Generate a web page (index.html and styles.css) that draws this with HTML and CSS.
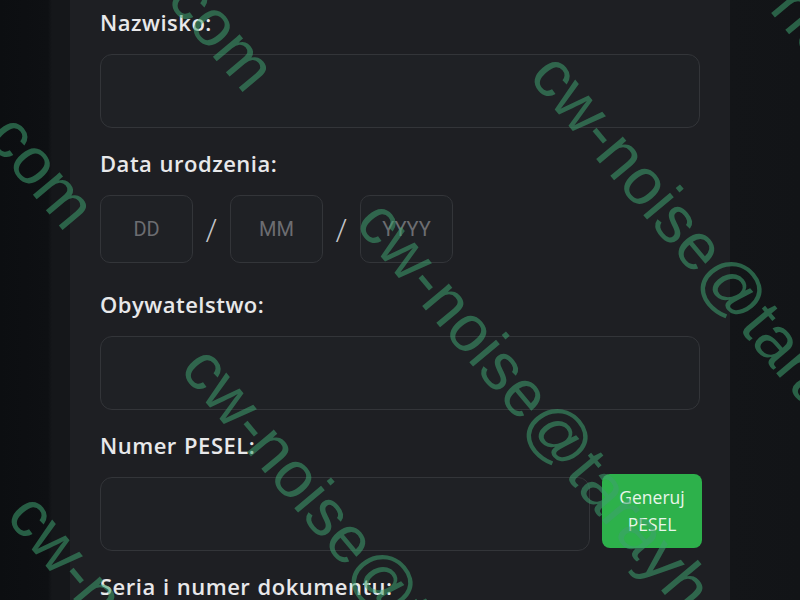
FILE: index.html
```html
<!DOCTYPE html>
<html lang="pl">
<head>
<meta charset="utf-8">
<title>Formularz</title>
<link rel="stylesheet" href="styles.css">
</head>
<body>
<div class="page">
  <main class="card">
    <div class="field">
      <label class="label">Nazwisko:</label>
      <input class="input" type="text">
    </div>
    <div class="field">
      <label class="label">Data urodzenia:</label>
      <div class="date-row">
        <input class="date-box" type="text" placeholder="DD">
        <span class="slash">/</span>
        <input class="date-box" type="text" placeholder="MM">
        <span class="slash">/</span>
        <input class="date-box" type="text" placeholder="YYYY">
      </div>
    </div>
    <div class="field">
      <label class="label">Obywatelstwo:</label>
      <input class="input" type="text">
    </div>
    <div class="field">
      <label class="label">Numer PESEL:</label>
      <div class="pesel-row">
        <input class="input" type="text">
        <button class="btn" type="button">Generuj<br>PESEL</button>
      </div>
    </div>
    <div class="field">
      <label class="label">Seria i numer dokumentu:</label>
    </div>
  </main>
  <div class="watermarks" aria-hidden="true">
    <span class="wm wm-a">cw-noise@tarayh</span>
    <span class="wm wm-b">cw-noise@tarayh</span>
    <span class="wm wm-c">cw-noise@tarayh</span>
    <span class="wm wm-d">cw-noise@tarayh</span>
    <span class="wm wm-e">cw-noise@tarayh</span>
    <span class="wm wm-f">.com</span>
    <span class="wm wm-g">.com</span>
  </div>
</div>
</body>
</html>
```
FILE: styles.css
```css
* { box-sizing: border-box; }

html, body {
  margin: 0;
  height: 600px;
  overflow: hidden;
}

body {
  background: linear-gradient(to right, #0c0e11 0, #0e1013 48px, #15171a 52px, #15171a 70px, #1e1f23 70px, #1e1f23 730px, #131518 730px, #121417 800px);
  font-family: "Open Sans", "Liberation Sans", sans-serif;
  color: #e6e6e8;
}

.page {
  position: relative;
  height: 600px;
}

.card {
  margin-left: 70px;
  width: 660px;
  height: 600px;
  background: #1e1f23;
  padding: 7px 30px 0;
}

.field {
  margin-bottom: 20px;
}

.label {
  display: block;
  font-size: 22px;
  line-height: 30px;
  font-weight: 600;
  letter-spacing: 0.5px;
  word-spacing: 1px;
  color: #e8e8ea;
  margin-bottom: 17px;
}

.input {
  display: block;
  width: 600px;
  height: 74px;
  background: #1f2125;
  border: 1.5px solid #333539;
  border-radius: 12px;
  outline: none;
  flex-shrink: 0;
}

.date-row {
  display: flex;
  align-items: center;
  gap: 12px;
  padding-bottom: 6px;
}

.date-box {
  width: 93px;
  height: 68px;
  background: #1f2125;
  border: 1.5px solid #333539;
  border-radius: 10px;
  text-align: center;
  font-family: "Roboto", "Liberation Sans", sans-serif;
  font-size: 20px;
  color: #c8c8cc;
  outline: none;
}

.date-box::placeholder {
  color: #6c6d71;
}

.slash {
  width: 13px;
  text-align: center;
  font-family: "Roboto", "Liberation Sans", sans-serif;
  font-size: 30px;
  font-weight: 300;
  color: #c4c5c9;
}

.pesel-row {
  display: flex;
  align-items: flex-start;
  gap: 12px;
}

.pesel-row .input {
  width: 490px;
}

.btn {
  flex-shrink: 0;
  width: 100px;
  height: 74px;
  margin-top: -3px;
  border: none;
  border-radius: 8px;
  background: #2db14b;
  color: #e8f5ea;
  font-family: "Open Sans", "Liberation Sans", sans-serif;
  font-size: 17.5px;
  line-height: 27px;
  padding: 0;
}

.watermarks {
  position: absolute;
  inset: 0;
  overflow: hidden;
  pointer-events: none;
}

.wm {
  position: absolute;
  white-space: nowrap;
  font-family: "Liberation Sans", sans-serif;
  font-size: 66px;
  line-height: 66px;
  color: rgba(62, 160, 112, 0.55);
  transform-origin: 0 50%;
  transform: rotate(50deg);
}

.wm-a { left: 720px; top: -117px; }
.wm-b { left: 545px; top: 29px; }
.wm-c { left: 371px; top: 176px; }
.wm-d { left: 196px; top: 322px; }
.wm-e { left: 22px; top: 469px; }
.wm-f { left: 171px; top: -62px; }
.wm-g { left: -9px; top: 76px; }
```
